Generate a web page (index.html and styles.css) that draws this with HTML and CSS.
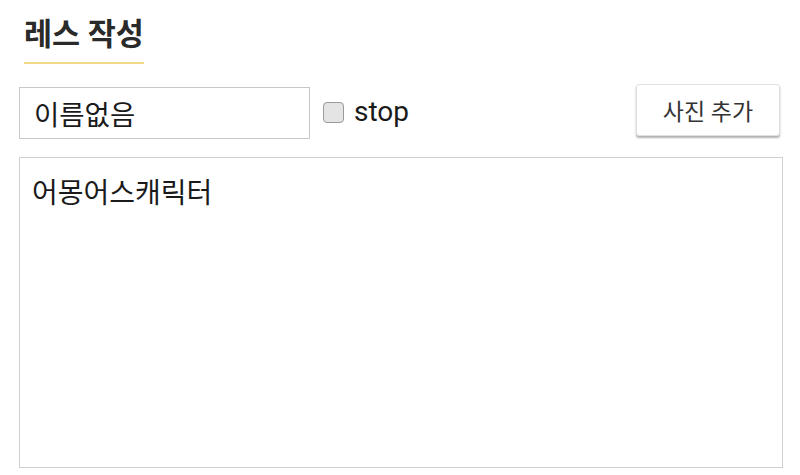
FILE: index.html
```html
<!DOCTYPE html>
<html>

<head>
    <meta charset="utf-8">
    <title>레스 작성</title>
    <link rel="stylesheet" href="styles.css">
</head>

<body>
    <div id="write">
        <div class="title">
            <h2>레스 작성</h2>
        </div>
        <div class="row">
            <input type="text" id="name" value="이름없음">
            <label class="stop"><span class="box"></span>stop</label>
            <button id="photo">사진 추가</button>
        </div>
        <textarea id="content" spellcheck="false">어몽어스캐릭터</textarea>
    </div>
</body>

</html>
```

FILE: styles.css
```css
body {
    font-family: Roboto, "Noto Sans CJK KR", sans-serif;
    background-color: #fff;
    color: #222;
    margin: 0;
    padding: 0;
}

#write {
    display: flex;
    flex-direction: column;
    padding: 16px 17px 0 19px;
}

.title {
    display: flex;
    padding-left: 5px;
}

.title h2 {
    margin: 0;
    font-size: 30.5px;
    line-height: 38px;
    font-weight: bold;
    color: #2a2a2a;
    padding-bottom: 8px;
    border-bottom: 2px solid #f2d98a;
}

.row {
    display: flex;
    flex-direction: row;
    align-items: flex-start;
    margin-top: 20px;
    padding-right: 3px;
}

#name {
    width: 291px;
    height: 52px;
    box-sizing: border-box;
    border: 1px solid #c8c8c8;
    outline: none;
    padding: 0 14px;
    font-family: Roboto, "Noto Sans CJK KR", sans-serif;
    font-size: 27.5px;
    color: #1a1a1a;
    margin-top: 3px;
}

.stop {
    display: flex;
    align-items: center;
    height: 52px;
    font-size: 28px;
    color: #1a1a1a;
    margin-left: 13px;
    margin-top: 1px;
}

.stop .box {
    width: 21px;
    height: 21px;
    box-sizing: border-box;
    border: 1px solid #9a9a9a;
    border-radius: 4px;
    background: #e4e4e4;
    margin-right: 10px;
    margin-top: 3px;
}

#photo {
    margin-left: auto;
    width: 144px;
    height: 52px;
    border: 1px solid #e0e0e0;
    border-radius: 3px;
    background: #fff;
    box-shadow: 0 2px 2px rgba(0, 0, 0, 0.3);
    font-family: Roboto, "Noto Sans CJK KR", sans-serif;
    font-size: 23px;
    color: #333;
}

#content {
    margin-top: 18px;
    width: 764px;
    height: 311px;
    box-sizing: border-box;
    border: 1px solid #d0d0d0;
    outline: none;
    resize: none;
    padding: 13px 12px;
    font-family: Roboto, "Noto Sans CJK KR", sans-serif;
    font-size: 28px;
    color: #1a1a1a;
}
```
